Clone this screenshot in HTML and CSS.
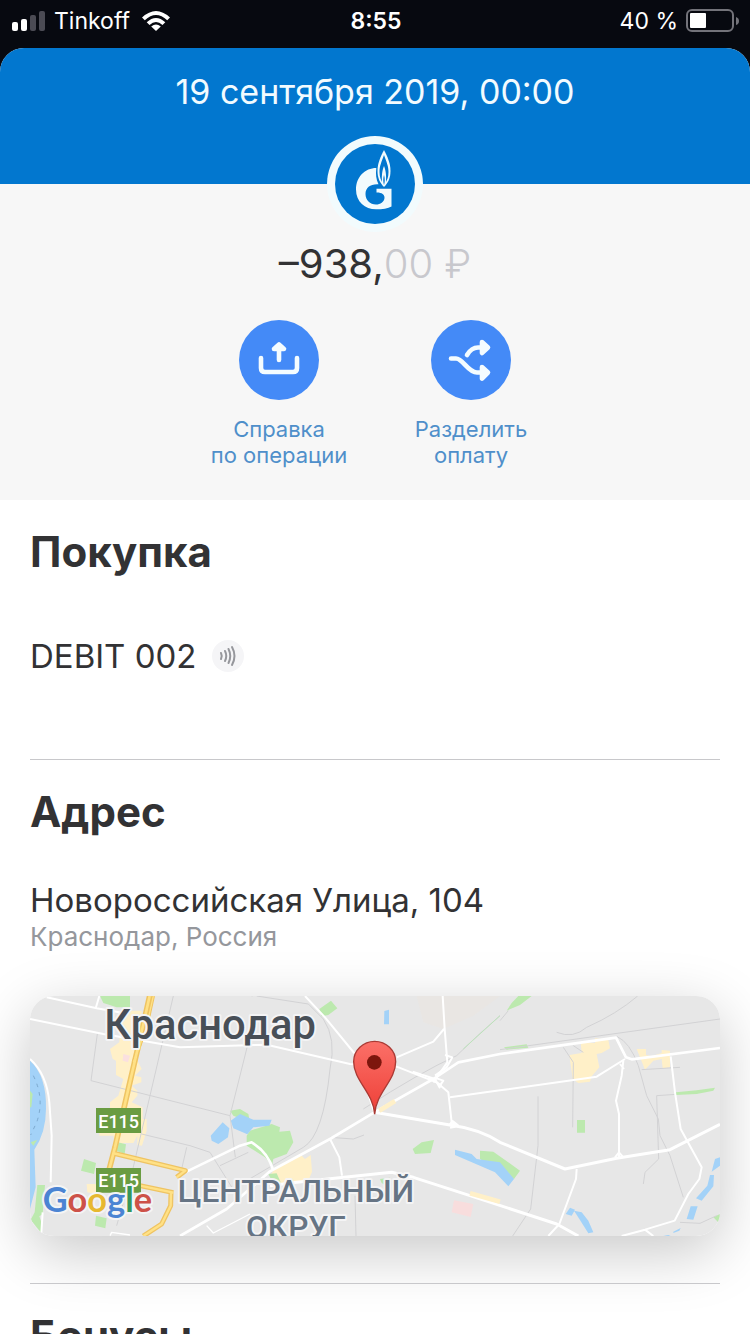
FILE: index.html
```html
<!DOCTYPE html>
<html lang="ru">
<head>
<meta charset="utf-8">
<meta name="viewport" content="width=device-width, initial-scale=1">
<title>Операция</title>
<link rel="stylesheet" href="styles.css">
</head>
<body>
<div class="screen">
  <div class="status">
    <div class="status-side">
      <svg class="signal" width="34" height="20" viewBox="0 0 34 20" aria-hidden="true">
        <rect x="0" y="11" width="6" height="9" rx="2" fill="#fff"/>
        <rect x="9" y="8" width="6" height="12" rx="2" fill="#fff"/>
        <rect x="18" y="4" width="6" height="16" rx="2" fill="#4b4b54"/>
        <rect x="27" y="0" width="6" height="20" rx="2" fill="#4b4b54"/>
      </svg>
      <span class="carrier">Tinkoff</span>
      <svg class="wifi" width="28" height="20" viewBox="0 0 28 20" aria-hidden="true">
        <path d="M0 6.500Q14-6.500 28 6.500L25.200 9.300Q14-1.200 2.800 9.300Z" fill="#fff"/>
        <path d="M4.700 11.200Q14 2.600 23.300 11.200L20.500 14Q14 8 7.500 14Z" fill="#fff"/>
        <path d="M9.200 15.500Q14 11.600 18.800 15.500L14 20Z" fill="#fff"/>
      </svg>
    </div>
    <span class="clock">8:55</span>
    <div class="status-side status-right">
      <span>40 %</span>
      <svg width="54" height="24" viewBox="0 0 54 24" aria-hidden="true">
        <rect x="1" y="1" width="46" height="21" rx="5" fill="none" stroke="#73737a" stroke-width="2"/>
        <rect x="4" y="4" width="16" height="15" rx="1" fill="#fff"/>
        <path d="M50 8Q53 9 53 12T50 16Z" fill="#73737a"/>
      </svg>
    </div>
  </div>

  <main class="card">
    <header class="hero">
      <time class="date" datetime="2019-09-19T00:00">19 сентября 2019, 00:00</time>
    </header>

    <section class="summary">
      <svg class="merchant" viewBox="0 0 96 96" role="img" aria-label="Газпромнефть">
        <circle cx="48" cy="48" r="48" fill="#f2fbfd"/>
        <circle cx="48" cy="48" r="40" fill="#0277cf"/>
        <path d="M49.300 32C38 32 29 41 29 53.500C29 66 38 73.300 49 73.300C55.500 73.300 61 72.500 64.500 70.500V52.700H49.500V56.500C54.500 56.300 57.800 58.500 57.500 62C57 66 53.500 68.500 49 68.500C43 68.500 38.500 64 38.500 58C38.500 51.500 43.500 47.800 51.500 48.300C49 43.500 48.600 38 49.300 32Z" fill="#f2fbfd"/>
        <path d="M57 14C53.500 21 50.500 27 50.500 35C50.500 42 53 47 57 51C61 47 63.500 42 63.500 35C63.500 27 60.500 21 57 14Z" fill="#f2fbfd"/>
        <path d="M57 19C54.500 26 52.500 30 52.500 36C52.500 41 54 44 55 46C54.500 38 55.500 34 57 30C58.500 34 59.500 38 59 46C60 44 61.500 41 61.500 36C61.500 30 59.500 26 57 19Z" fill="#0277cf"/>
        <path d="M57 39C56 42 56 46 57 49C58 46 58 42 57 39Z" fill="#0277cf"/>
      </svg>
      <p class="amount">–938,<span>00 ₽</span></p>
      <div class="actions">
        <button class="action" type="button">
          <svg viewBox="0 0 80 80" aria-hidden="true">
            <circle cx="40" cy="40" r="40" fill="#448af7"/>
            <g fill="none" stroke="#f4fcff" stroke-width="4.600" stroke-linecap="round" stroke-linejoin="round">
              <path d="M22 38V48Q22 52 26 52H54Q58 52 58 48V38M40 40V28"/>
              <path d="M35 29L40 24.500L45 29Z" fill="#f4fcff"/>
            </g>
          </svg>
          <span>Справка<br>по операции</span>
        </button>
        <button class="action" type="button">
          <svg viewBox="0 0 80 80" aria-hidden="true">
            <circle cx="40" cy="40" r="40" fill="#448af7"/>
            <g fill="none" stroke="#f4fcff" stroke-width="4.600" stroke-linecap="round" stroke-linejoin="round">
              <path d="M20 38.500H25C32 38.500 37 52.500 46 52.500H53M36 35C39 30 42 27.500 47 27.500H53"/>
              <path d="M51 22L57 27.500L51 33ZM51 47L57 52.500L51 58.500Z" fill="#f4fcff"/>
            </g>
          </svg>
          <span>Разделить<br>оплату</span>
        </button>
      </div>
    </section>

    <section class="block purchase">
      <h2>Покупка</h2>
      <div class="account">
        <span>DEBIT 002</span>
        <svg width="32" height="32" viewBox="0 0 32 32" role="img" aria-label="Бесконтактная оплата">
          <circle cx="16" cy="16" r="16" fill="#f5f5f7"/>
          <g fill="none" stroke="#96979c" stroke-width="2" stroke-linecap="round">
            <path d="M9 13Q10.500 16 9 19M13 11Q15.500 16 13 21M16.500 9Q20 16 16.500 23M20 7Q25 16 20 25"/>
          </g>
        </svg>
      </div>
    </section>

    <section class="block address">
      <h2>Адрес</h2>
      <p class="street">Новороссийская Улица, 104</p>
      <p class="city">Краснодар, Россия</p>
      <svg class="map" viewBox="90 51 2070 720" preserveAspectRatio="xMidYMid slice" role="img" aria-label="Карта">
        <rect x="90" y="51" width="2070" height="720" fill="#e7e7e7"/>
        <path d="M1250 51H1500L1420 110L1330 150L1270 130Z" fill="#e9e6e3"/>
        <g fill="#fff0c8">
          <path d="M365 95H425V150L410 240L425 270L405 290L424 295V310L395 320L412 335V350L395 370L428 385V420H440V455L426 500L412 498V470L400 492H370L350 520L340 470H298V462L330 440V370L355 350L370 300L348 288V245L338 240L330 210L358 190Z"/>
          <path d="M260 615H300V648L262 640Z"/>
          <path d="M820 575L900 525L915 540L932 528L936 578L925 605L890 612L840 618L810 590Z"/>
          <path d="M1708 228L1745 222L1742 190L1785 192V178L1825 182L1830 208L1805 222L1790 225L1798 265L1775 292L1770 308L1735 312L1718 300Z"/>
          <path d="M1910 210H1938V228L1955 232L1985 222V213L2010 215V265L1988 268L1985 240L1960 245L1935 272Z"/>
        </g>
        <g fill="#bce9ae">
          <path d="M300 51H390V85H350L310 72Z"/>
          <path d="M348 488L378 496L374 525L342 512ZM252 540L288 552L282 585L243 575ZM288 710L320 718L316 748L285 740Z"/>
          <path d="M112 618H135L128 705L118 712L126 735L122 760L92 722L104 700Z"/>
          <path d="M740 470L750 455L815 435L840 445L838 458L870 455L880 490L860 525L820 540L816 560L795 535L740 500Z"/>
          <path d="M690 395L720 390L745 405L750 430L700 410Z"/>
          <path d="M958 90L993 65L1012 88L985 108L965 112ZM1238 510L1265 490L1302 483L1292 522L1245 525ZM1140 600L1170 596L1165 625L1145 612ZM805 585L830 583L842 610L818 610Z"/>
          <path d="M1520 95L1535 72L1555 51H1595L1560 78ZM1512 205L1580 196L1585 206L1520 212ZM1440 515L1480 518L1560 575L1542 600L1440 540Z"/>
          <path d="M1731 423H1755V461H1731ZM2028 340L2090 334L2145 326L2140 335L2090 345L2028 348ZM2140 715L2160 705V735Z"/>
        </g>
        <g fill="#a3d2f8">
          <path d="M90 245Q140 290 138 390Q138 460 103 512L107 625L90 690Z"/>
          <path d="M632 470L668 430L688 448L684 475L655 495L635 485ZM692 425L720 405L760 422H815L808 440L760 445L742 466L700 448Z"/>
          <path d="M1153 96L1167 92V136H1152ZM1365 512L1415 525L1430 540L1500 550L1542 600L1525 622L1485 580L1365 528Z"/>
          <path d="M1697 705L1710 686L1725 692L1715 710ZM1722 695L1745 700L1765 725L1780 760L1765 763L1738 720ZM2145 540L2160 535V560L2135 578ZM2130 588L2142 588L2140 622L2105 665L2088 658L2122 620ZM2072 682L2093 682L2080 722L2060 720ZM2020 758L2042 747L2038 755L2020 762ZM1990 771L2005 768H2012L2005 771Z"/>
        </g>
        <path d="M90 335L98 345L94 385H90ZM92 490L112 482L100 500Z" fill="#bce9ae"/>
        <path d="M100 290Q135 360 110 430L92 468" fill="none" stroke="#6b96ba" stroke-width="2" stroke-dasharray="11 15"/>
        <path d="M1362 664L1420 675L1412 714L1355 700Z" fill="#f8dddd"/>
        <path d="M370 225L390 230L384 250L368 245Z" fill="#fae0e0"/>
        <g fill="none" stroke="#d2d2d4" stroke-width="3">
          <path d="M520 51L395 585L350 740M292 165L273 305L690 410L755 150M425 465L570 500L630 520L700 632M560 505L545 570M690 410L706 535M660 560L745 520M755 51L790 40M770 51L925 75L970 120Q1010 180 990 270Q970 470 910 505L740 605M990 475L1060 480L1092 468M1065 650L1068 771"/>
          <path d="M1090 390Q1260 280 1370 230Q1430 170 1500 110M1500 125L1525 95M1670 160Q1720 180 1760 145Q1850 105 1913 51M1500 212L2160 120M1690 205L1720 250L1718 445M1720 200L1750 220M1614 352V500L1592 690L1538 771M1850 172Q1890 190 1915 260L1940 350L1975 420L1980 470L2010 530L2050 655M2040 265L1925 272M2028 346L1970 350L1976 540L1935 580L1930 615M2040 730L2100 733L2150 710"/>
          <path d="M1390 210L1500 110" stroke="#bce3ba"/>
        </g>
        <g fill="none" stroke="#fff" stroke-width="6" stroke-linejoin="round">
          <path d="M140 55L290 88L370 102M298 51L288 85M90 120L310 165L540 205L800 197L1050 255L1190 263L1310 310L1345 340L1355 430"/>
          <path d="M90 240Q140 285 148 370L155 470L152 610M128 700L124 762"/>
          <path d="M555 580L720 500L755 490Q805 520 820 575M540 771L680 690L810 577L990 480L1123 400L1300 300L1375 250L1500 225L1848 176L1878 235L1895 241L2160 207" stroke-width="8"/>
          <path d="M915 51L975 115L1065 225L1123 400M990 480L1018 535L1026 590M1328 51L1334 150L1342 250L1300 310M1190 235L1300 188L1332 150M1350 355L1500 334L1790 293L1875 240"/>
          <path d="M1335 228L1357 235L1340 265L1305 290M1238 278L1305 300L1320 328M1285 295L1325 320M1310 298L1330 305L1318 322"/>
          <path d="M1123 400L1350 438Q1440 450 1500 490L1695 570L1850 538L2010 512L2160 436M1350 438L1358 428L1373 440L1350 445" stroke-width="9"/>
          <path d="M810 620L890 610L1175 580L1240 595L1410 650L1670 735L1735 771M1145 771" stroke-width="9"/>
          <path d="M1870 245L1865 290L1848 365L1857 405V535M1845 535L1857 520L1870 535M2012 232L2025 340L2042 450L2105 565L2098 600L2065 645L2024 725L1935 752L1865 771M1645 771L1678 735L1728 600L1730 570M1935 752L1960 771M1860 255L1872 270"/>
          <path d="M620 740L640 762L750 705M330 770L335 760L390 768" stroke-width="4"/>
        </g>
        <path d="M1500 668L1410 643M1138 395L1185 366" stroke="#fff0c8" stroke-width="14"/>
        <g fill="none" stroke-linejoin="round">
          <g stroke="#efc463">
            <path d="M449 51L428 145L385 330L345 505L320 600" stroke-width="17"/>
            <path d="M338 522L556 575L530 595M420 620L520 641M513 640L512 680L485 735L430 771" stroke-width="15"/>
            <path d="M460 51L438 150L400 250" stroke-width="10"/>
          </g>
          <g stroke="#ffe186">
            <path d="M449 51L428 145L385 330L345 505L320 600" stroke-width="8"/>
            <path d="M338 522L556 575L530 595M420 620L520 641M513 640L512 680L485 735L430 771" stroke-width="7"/>
            <path d="M460 51L438 150L400 250" stroke-width="4"/>
          </g>
        </g>
        <path d="M288 387H423V462H288ZM288 567H423V641H288Z" fill="#6a9c42"/>
        <g class="road">
          <text x="356" y="446" text-anchor="middle">E115</text>
          <text x="356" y="624" text-anchor="middle">E115</text>
        </g>
        <text class="place" x="630" y="181" text-anchor="middle">Краснодар</text>
        <g class="district">
          <text x="888" y="670" text-anchor="middle">ЦЕНТРАЛЬНЫЙ</text>
          <text x="888" y="778" text-anchor="middle">ОКРУГ</text>
        </g>
        <text class="google" x="128" y="700"><tspan fill="#4b84d3">G</tspan><tspan fill="#cd5148">o</tspan><tspan fill="#e7b82f">o</tspan><tspan fill="#4b84d3">g</tspan><tspan fill="#37965a">l</tspan><tspan fill="#cd5148">e</tspan></text>
        <defs>
          <linearGradient id="pin" x1="0" y1="0" x2="0" y2="1">
            <stop offset="0" stop-color="#fb7068"/>
            <stop offset="1" stop-color="#ee3f37"/>
          </linearGradient>
        </defs>
        <path d="M1124 406C1120 340 1061 305 1061 248A63 61 0 0 1 1187 248C1187 305 1128 340 1124 406Z" fill="url(#pin)" stroke="#aa3a34" stroke-width="4"/>
        <circle cx="1123" cy="250" r="22" fill="#7d160d"/>
      </svg>
    </section>

    <section class="block">
      <h2>Бонусы</h2>
    </section>
  </main>
</div>
</body>
</html>
```
FILE: styles.css
```css
* {
  box-sizing: border-box;
}

body,
h2,
p {
  margin: 0;
}

body {
  background: #fff;
  color: #323234;
  font-family: Inter, "Liberation Sans", sans-serif;
}

svg {
  display: block;
  flex: none;
}

.screen {
  height: 100vh;
  overflow: hidden;
  background: linear-gradient(#070910 0 100px, #fff 100px);
}

.status {
  display: grid;
  grid-template-columns: 1fr auto 1fr;
  align-items: center;
  height: 48px;
  padding: 0 10px 6px 12px;
  color: #fff;
  font-size: 23px;
  line-height: 32px;
}

.status-side {
  display: flex;
  align-items: center;
  gap: 8px;
}

.carrier {
  margin-right: 4px;
}

.status-right {
  justify-content: flex-end;
}

.clock {
  font-weight: 600;
}

.card {
  overflow: hidden;
  border-radius: 24px 24px 0 0;
  background: #fff;
}

.hero {
  display: flex;
  justify-content: center;
  height: 136px;
  padding-top: 24px;
  background: #0277cf;
  color: #f2fbff;
}

.date {
  font-size: 34px;
  line-height: 40px;
}

.summary {
  display: flex;
  flex-direction: column;
  align-items: center;
  padding-bottom: 32px;
  background: #f7f7f7;
}

.merchant {
  width: 96px;
  height: 96px;
  margin-top: -48px;
}

.amount {
  margin-top: 8px;
  font-size: 40px;
  line-height: 48px;
}

.amount span {
  color: #c8c8cd;
  font-weight: 300;
}

.actions {
  display: flex;
  justify-content: center;
  margin-top: 32px;
}

.action {
  display: flex;
  flex-direction: column;
  align-items: center;
  gap: 16px;
  width: 192px;
  padding: 0;
  border: 0;
  background: none;
  color: #4f8fca;
  font: inherit;
  font-size: 22px;
  line-height: 26px;
}

.action svg {
  width: 80px;
  height: 80px;
}

.block {
  margin: 0 30px;
  padding-top: 24px;
}

.block + .block {
  border-top: 1px solid #c8c8cb;
}

h2 {
  font-size: 42px;
  font-weight: 700;
  line-height: 56px;
}

.account {
  display: flex;
  align-items: center;
  gap: 16px;
  margin-top: 56px;
  margin-bottom: 83px;
  font-size: 33px;
  line-height: 40px;
}

.street {
  margin-top: 40px;
  font-size: 33px;
  line-height: 40px;
}

.city {
  color: #95979c;
  font-size: 26px;
  line-height: 34px;
}

.map {
  width: 100%;
  height: 240px;
  margin: 42px 0 47px;
  border-radius: 24px;
  box-shadow: 0 16px 60px rgba(0, 0, 0, 0.22);
}

.map text {
  font-family: Roboto, sans-serif;
  font-weight: 500;
  paint-order: stroke;
  stroke: #f4f4f5;
  stroke-width: 12px;
  stroke-linejoin: round;
}

.map .road text {
  fill: #fff;
  font-size: 54px;
  stroke: none;
}

.map .place {
  fill: #484f57;
  font-size: 125px;
}

.map .district text {
  fill: #667484;
  font-size: 95px;
}

.map .google {
  font-family: Lato, sans-serif;
  font-size: 103px;
  font-weight: 700;
}
```
